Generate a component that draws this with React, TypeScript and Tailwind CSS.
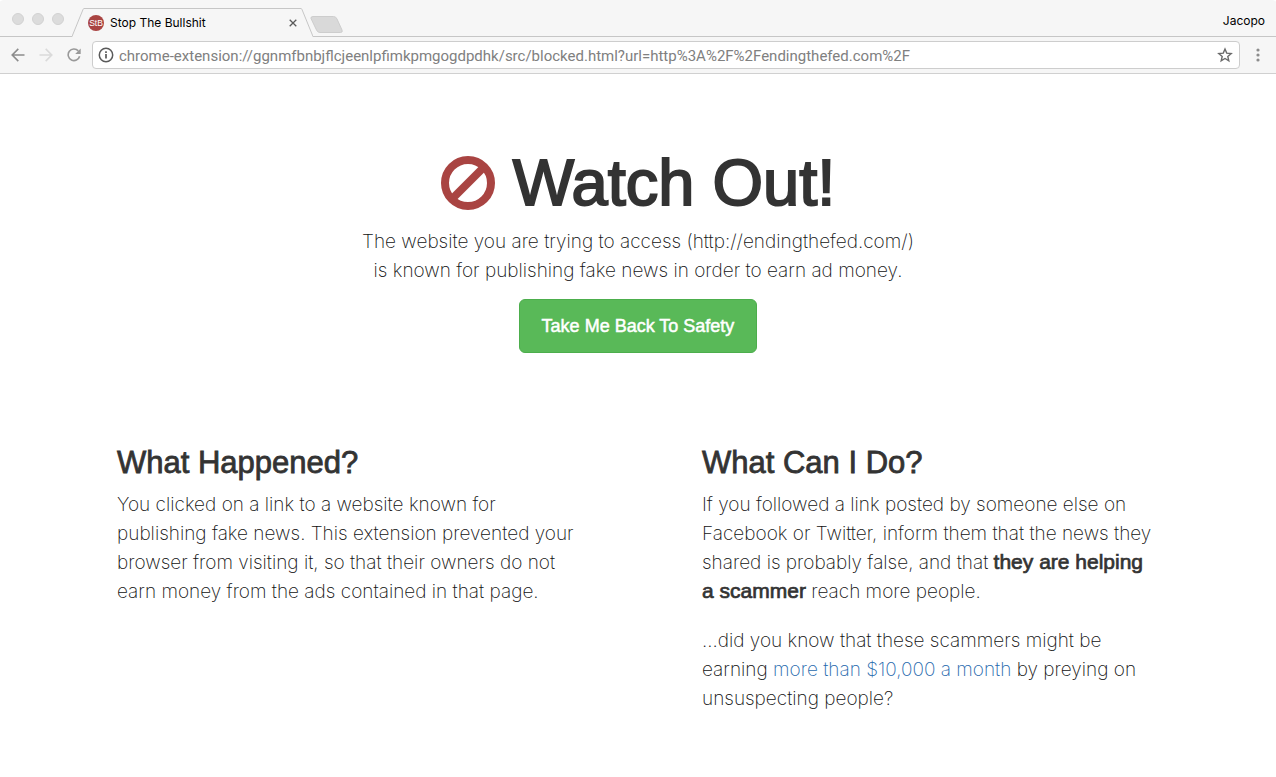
import type { ReactNode } from "react";

function Tab() {
  return (
    <div className="flex h-[29px] items-stretch">
      <svg className="h-[29px] w-3 shrink-0" viewBox="0 0 12 29" aria-hidden="true">
        <path d="M0 29 11 1.5Q11.500 .5 12 .5V29Z" fill="#f6f6f6" />
        <path d="M0 28.500 11 1.500Q11.400 .5 12 .5" fill="none" stroke="#c6c6c6" />
      </svg>
      <div className="flex w-[217px] items-center border-t border-[#c6c6c6] bg-[#f6f6f6] pl-1">
        <svg className="size-4 shrink-0" viewBox="0 0 16 16" aria-hidden="true">
          <circle cx="8" cy="8" r="8" fill="#a94442" />
          <text x="8" y="11" textAnchor="middle" fontSize="8.500" fill="#fff" fontFamily="Liberation Sans, sans-serif">StB</text>
        </svg>
        <span className="ml-1.5 flex-1 whitespace-nowrap text-xs text-black">Stop The Bullshit</span>
        <button aria-label="Close tab" className="flex size-4 items-center justify-center">
          <svg className="size-2" viewBox="0 0 8 8" fill="none" stroke="#5a5a5a" strokeWidth="1.300" aria-hidden="true">
            <path d="M.7.7l6.600 6.600M7.300.7.7 7.300" />
          </svg>
        </button>
      </div>
      <svg className="h-[29px] w-3 shrink-0" viewBox="0 0 12 29" aria-hidden="true">
        <path d="M12 29 1 1.500Q.5.5 0 .5V29Z" fill="#f6f6f6" />
        <path d="M12 28.500 1 1.500Q.6.5 0 .5" fill="none" stroke="#c6c6c6" />
      </svg>
    </div>
  );
}

function BrowserChrome() {
  return (
    <header className="font-[Inter,sans-serif]">
      <div className="flex h-[37px] items-end rounded-t bg-[#f6f6f6] pl-3 pr-[11px] shadow-[inset_0_-1px_0_#c6c6c6]">
        <div className="flex h-[37px] items-center gap-2">
          <span className="size-3 rounded-full border border-[#d2d2d2] bg-[#dcdcdc]" />
          <span className="size-3 rounded-full border border-[#d2d2d2] bg-[#dcdcdc]" />
          <span className="size-3 rounded-full border border-[#d2d2d2] bg-[#dcdcdc]" />
        </div>
        <div className="ml-2">
          <Tab />
        </div>
        <button aria-label="New tab" className="-ml-1 mb-1">
          <svg className="h-[17px] w-9" viewBox="0 0 36 17" aria-hidden="true">
            <path d="M4 .5H24.500Q27 .5 28 3L33 14Q34 16.500 31.500 16.500H11Q8.500 16.500 7.500 14L2 2.500Q1.500.5 4 .5Z" fill="#d9d9d9" stroke="#cdcdcd" />
          </svg>
        </button>
        <button className="mb-2 ml-auto text-xs text-black">Jacopo</button>
      </div>
      <div className="flex h-[37px] items-center border-b border-[#d0d0d0] bg-[#f6f6f6] pl-[11px] pr-4">
        <button aria-label="Back">
          <svg className="size-3.5" viewBox="0 0 14 14" fill="none" stroke="#8c8c8c" strokeWidth="1.600" aria-hidden="true">
            <path d="M13.500 7H1.500M7.300.9 1.200 7l6.100 6.100" />
          </svg>
        </button>
        <button aria-label="Forward" className="ml-3.5">
          <svg className="size-3.5" viewBox="0 0 14 14" fill="none" stroke="#dadada" strokeWidth="1.600" aria-hidden="true">
            <path d="M.5 7h12M6.700.9 12.800 7l-6.100 6.100" />
          </svg>
        </button>
        <button aria-label="Reload" className="ml-3.5">
          <svg className="size-3.5" viewBox="0 0 14 14" aria-hidden="true">
            <path d="M12.600 8.200A5.800 5.800 0 1 1 11.300 2.900" fill="none" stroke="#999" strokeWidth="1.600" />
            <path d="M13.700 .5v5.500H8.200Z" fill="#999" />
          </svg>
        </button>
        <div className="ml-[11px] flex h-7 flex-1 items-center rounded border border-[#cdcdcd] bg-white pl-[5px] pr-1.5">
          <svg className="size-4 shrink-0" viewBox="0 0 16 16" fill="none" stroke="#5a5a5a" strokeWidth="1.500" aria-hidden="true">
            <circle cx="8" cy="8" r="6.700" />
            <path d="M8 7v4.500M8 4.300v1.600" strokeWidth="1.700" />
          </svg>
          <input
            aria-label="Address"
            className="ml-[5px] min-w-0 flex-1 bg-transparent pt-0.5 font-[Roboto,sans-serif] text-[15px] text-[#808080] outline-none"
            defaultValue="chrome-extension://ggnmfbnbjflcjeenlpfimkpmgogdpdhk/src/blocked.html?url=http%3A%2F%2Fendingthefed.com%2F"
          />
          <button aria-label="Bookmark this page">
            <svg className="size-4" viewBox="0 0 16 16" fill="none" stroke="#6a6a6a" strokeWidth="1.400" aria-hidden="true">
              <path d="M8 2l1.700 4.100 4.500.4-3.400 2.900 1 4.400L8 11.500l-3.800 2.300 1-4.400L1.800 6.500l4.500-.4Z" />
            </svg>
          </button>
        </div>
        <button aria-label="Menu" className="ml-4">
          <svg className="h-3.5 w-1" viewBox="0 0 4 14" fill="#8c8c8c" aria-hidden="true">
            <circle cx="2" cy="2" r="1.600" />
            <circle cx="2" cy="7" r="1.600" />
            <circle cx="2" cy="12" r="1.600" />
          </svg>
        </button>
      </div>
    </header>
  );
}

function Section({ title, children }: { title: string; children: ReactNode }) {
  return (
    <section className="px-16">
      <h2 className="text-[31px] leading-[33px] [-webkit-text-stroke:0.800px_#333]">{title}</h2>
      <div className="mt-[11px] flex flex-col gap-5 font-[Inter,sans-serif] text-[19px] leading-[29px] font-extralight text-[#111]">{children}</div>
    </section>
  );
}

export default function App() {
  return (
    <div className="min-h-screen bg-white font-['Liberation_Sans',Arial,sans-serif] text-[#333]">
      <BrowserChrome />
      <main>
        <div className="flex flex-col items-center pt-[74px] text-center">
          <h1 className="flex items-center gap-[18px] text-[65px] leading-[69px] [-webkit-text-stroke:2px_#333]">
            <svg className="size-[54px]" viewBox="0 0 54 54" fill="none" stroke="#a94442" strokeWidth="8" aria-hidden="true">
              <circle cx="27" cy="27" r="23" />
              <path d="M10.500 43.500l33-33" />
            </svg>
            Watch Out!
          </h1>
          <p className="mt-2.5 font-[Inter,sans-serif] text-[19px] leading-[29px] font-extralight text-[#111]">
            The website you are trying to access (http://endingthefed.com/)
            <br />
            is known for publishing fake news in order to earn ad money.
          </p>
          <button className="mt-3.5 rounded-md border border-[#4cae4c] bg-[#59b958] px-[22px] py-[14px] text-lg leading-6 text-white [-webkit-text-stroke:0.500px_#fff]">
            Take Me Back To Safety
          </button>
        </div>
        <div className="mx-auto mt-[93px] grid max-w-[1170px] grid-cols-2">
          <Section title="What Happened?">
            <p>
              You clicked on a link to a website known for publishing fake news. This extension prevented your browser
              from visiting it, so that their owners do not earn money from the ads contained in that page.
            </p>
          </Section>
          <Section title="What Can I Do?">
            <p>
              If you followed a link posted by someone else on Facebook or Twitter, inform them that the news they
              shared is probably false, and that{" "}
              <strong className="font-['Liberation_Sans',Arial,sans-serif] text-[21px] leading-none font-normal text-[#333] [-webkit-text-stroke:0.700px_#333]">
                they are helping a{"\u00a0"}scammer
              </strong>{" "}
              reach more people.
            </p>
            <p>
              ...did you know that these scammers might be earning{" "}
              <a href="#earnings" className="text-[#1f69ad]">more than $10,000 a month</a> by preying on unsuspecting
              people?
            </p>
          </Section>
        </div>
      </main>
    </div>
  );
}
